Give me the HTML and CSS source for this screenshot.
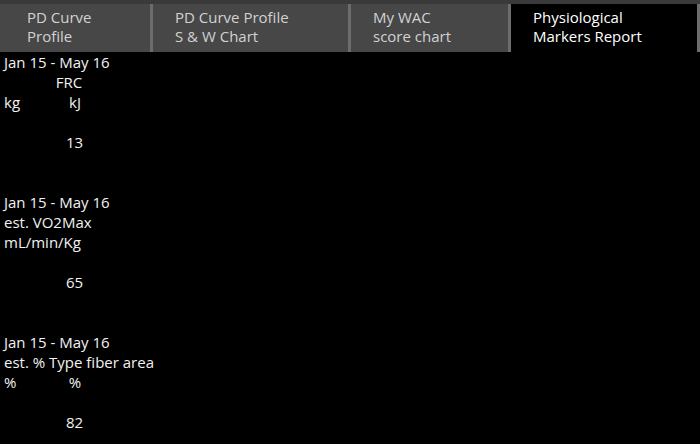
FILE: index.html
```html
<!DOCTYPE html>
<html lang="en">
<head>
    <meta charset="UTF-8">
    <meta name="viewport" content="width=device-width, initial-scale=1.0">
    <title>Physiological Markers Report</title>
    <link rel="stylesheet" href="styles.css">
</head>
<body>
    <!-- Barra de abas -->
    <div class="tabs">
        <div class="tab first">PD Curve<br>Profile</div>
        <div class="tab second">PD Curve Profile<br>S &amp; W Chart</div>
        <div class="tab third">My WAC<br>score chart</div>
        <div class="tab active">Physiological<br>Markers Report</div>
    </div>

    <!-- Relatório -->
    <div class="report">
        <div class="block">
            <div class="row">Jan 15 - May 16</div>
            <div class="row title-center">FRC</div>
            <div class="row units"><span class="u1">kg</span><span class="u2">kJ</span></div>
            <div class="row"></div>
            <div class="row value">13</div>
        </div>
        <div class="block">
            <div class="row">Jan 15 - May 16</div>
            <div class="row">est. VO2Max</div>
            <div class="row">mL/min/Kg</div>
            <div class="row"></div>
            <div class="row value">65</div>
        </div>
        <div class="block">
            <div class="row">Jan 15 - May 16</div>
            <div class="row">est. % Type fiber area</div>
            <div class="row units"><span class="u1">%</span><span class="u2">%</span></div>
            <div class="row"></div>
            <div class="row value">82</div>
        </div>
    </div>
</body>
</html>
```

FILE: styles.css
```css
body {
    margin: 0;
    width: 700px;
    height: 444px;
    background: #000;
    font-family: "Open Sans", "Noto Sans", sans-serif;
    font-size: 15px;
    color: #f2f2f2;
    overflow: hidden;
}
.tabs {
    display: flex;
    height: 48px;
    padding-top: 4px;
    background: #3a3a3a;
}
.tab {
    box-sizing: border-box;
    height: 48px;
    padding: 4px 0 0 22px;
    line-height: 19px;
    background: #474747;
    color: #d2d2d2;
    border-left: 3px solid #6c6c6c;
}
.tab.first {
    width: 150px;
    border-left: none;
    padding-left: 27px;
}
.tab.second {
    width: 198px;
}
.tab.third {
    width: 160px;
}
.tab.active {
    width: 192px;
    background: #000;
    color: #fff;
    border-right: 3px solid #6c6c6c;
}
.report {
    height: 392px;
    padding-left: 4px;
    overflow: hidden;
}
.block {
    height: 140px;
}
.block:last-child {
    height: auto;
}
.row {
    height: 20px;
    line-height: 20px;
    white-space: nowrap;
}
.title-center {
    width: 130px;
    text-align: center;
}
.units {
    display: flex;
}
.u1 {
    width: 62px;
}
.u2 {
    width: 18px;
    text-align: center;
}
.value {
    width: 80px;
    padding-left: 62px;
    box-sizing: border-box;
}
```
